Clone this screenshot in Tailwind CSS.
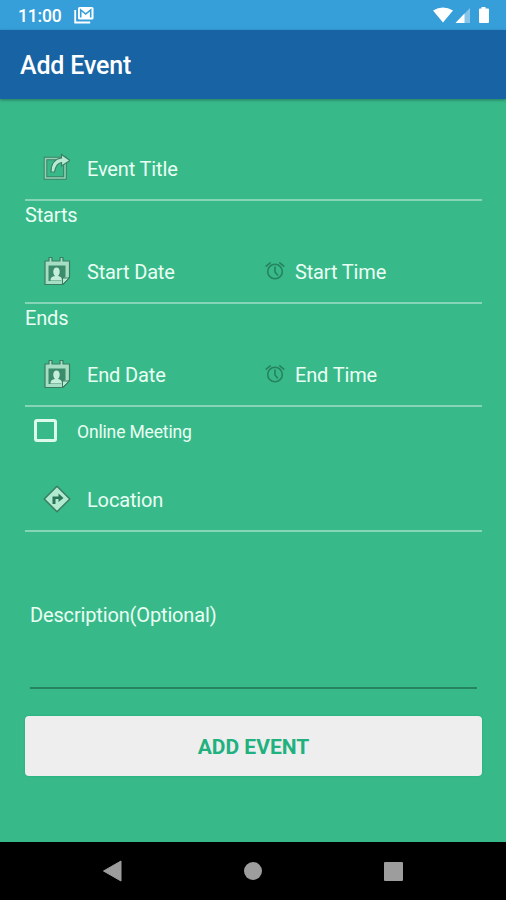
<!DOCTYPE html>
<html lang="en">
<head>
    <meta charset="UTF-8">
    <meta name="viewport" content="width=device-width, initial-scale=1">
    <title>Add Event</title>
    <script src="https://cdn.jsdelivr.net/npm/@tailwindcss/browser@4"></script>
</head>

<body class="flex flex-col h-screen overflow-hidden bg-[#38b98a] font-[Roboto,sans-serif] text-[20px] leading-7 tracking-[-0.15px] text-[#eafff3]">

    <!-- shared icons -->
    <svg class="hidden">
        <symbol id="calendar" viewBox="0 0 28 30">
            <path d="M2 5h4V1.500h3V5h8V1.500h3V5h6.500v16.500L20 28.500H2z" fill="#a5dec3" stroke="#397e62" stroke-width="1.200" stroke-linejoin="round"/>
            <path d="M5.500 9.500h17v11L18 25H5.500z" fill="#3c8b6a"/>
            <path d="M7.500 24.500c0-3 1.500-4 4.500-4.500-2.500-2-2.500-8.500 1.500-8.500s4 6.500 1.500 8.500c2.500.5 4 1.500 4 4.500z" fill="#c5eed9"/>
            <path d="M19.500 28.500V22h6.500z" fill="#b8ead3" stroke="#397e62"/>
        </symbol>
        <symbol id="alarm" viewBox="0 0 20 20">
            <g fill="none" stroke="#26825f" stroke-width="1.600" stroke-linecap="round">
                <circle cx="10" cy="10.500" r="7.300"/>
                <path d="M10 6v5l2.500 3M1.200 5.200l4-3.400M18.800 5.200l-4-3.400"/>
            </g>
        </symbol>
    </svg>

    <div class="flex items-center justify-between h-[30px] shrink-0 pl-[18px] pr-[15px] bg-[#369fd9] text-white">
        <div class="flex items-center gap-[12px]">
            <span class="text-[17.500px] font-medium leading-none pt-[3px]">11:00</span>
            <svg class="w-5 h-[18px]" viewBox="0 0 20 18" fill="none">
                <path d="M1.200 4v12.500h15" stroke="#fff" stroke-width="1.800"/>
                <rect x="4" y="1" width="15.500" height="12.500" rx="1.500" fill="#fff"/>
                <path d="M6.700 11.500V4l5 4 5-4v7.500" stroke="#369fd9" stroke-width="1.600"/>
            </svg>
        </div>
        <svg class="w-[58px] h-5" viewBox="0 0 58 20" fill="#fff">
            <path d="M0 5.500Q10-.5 20 5.500L10 17.500z"/>
            <path d="M22.500 18L37 3v15z" opacity=".4"/>
            <path d="M22.500 18l9-9.500V18z"/>
            <path d="M48.500 2h4v1.500H55q1 0 1 1V17q0 1-1 1h-8q-1 0-1-1V4.500q0-1 1-1h1.500z"/>
        </svg>
    </div>

    <header class="flex items-center h-[69px] shrink-0 px-5 pt-[3px] bg-[#1763a3] text-white text-[25px] font-medium shadow-[0_1px_3px_rgba(0,0,0,0.35)]">
        Add Event
    </header>

    <main class="grow pl-[25px] pr-6 pt-[38px]">
        <div class="flex items-center h-[64px] pl-[17px] pb-[2px] border-b-2 border-white/40">
            <svg class="w-7 h-7 mr-[17px]" viewBox="0 0 28 28" fill="none">
                <path d="M3.500 5.500H23V25H3.500z" stroke="#3b8165" stroke-width="3.600"/>
                <path d="M3.500 5.500H23V25H3.500z" stroke="#8fd3b4" stroke-width="1.600"/>
                <path d="M9 19C9 11.500 12.500 6 19.500 5V1.500l8.500 6-8.500 5.500V9.500c-4 .5-6 4-7 9.500z" fill="#b9ebd3" stroke="#3b8165" stroke-width="1.200"/>
            </svg>
            <span class="pt-[3px]">Event Title</span>
        </div>

        <div>Starts</div>
        <div class="flex items-center h-[75px] pl-[18px] pb-[9px] pt-[20px] border-b-2 border-white/40">
            <svg class="w-7 h-[30px] mr-[16px]"><use href="#calendar"/></svg>
            <span class="w-[178px] pt-[2px]">Start Date</span>
            <svg class="w-5 h-5 mr-[10px]"><use href="#alarm"/></svg>
            <span class="pt-[2px]">Start Time</span>
        </div>

        <div>Ends</div>
        <div class="flex items-center h-[75px] pl-[18px] pb-[9px] pt-[20px] border-b-2 border-white/40">
            <svg class="w-7 h-[30px] mr-[16px]"><use href="#calendar"/></svg>
            <span class="w-[178px] pt-[2px]">End Date</span>
            <svg class="w-5 h-5 mr-[10px]"><use href="#alarm"/></svg>
            <span class="pt-[2px]">End Time</span>
        </div>

        <label class="flex items-center h-12 pl-[9px] pb-[2px] gap-5">
            <input type="checkbox" class="appearance-none w-[23px] h-[23px] border-[3px] border-[#dcf9ec] rounded-[3px]">
            <span class="text-[17.500px] pt-[4px]">Online Meeting</span>
        </label>

        <div class="flex items-center h-[77px] pt-[12px] pl-[18px] border-b-2 border-white/40">
            <svg class="w-7 h-7 mr-[16px]" viewBox="0 0 28 28">
                <path d="M14 1.200L26.800 14 14 26.800 1.200 14z" fill="#b2ead0" stroke="#397e62" stroke-width="1.500" stroke-linejoin="round"/>
                <path d="M9.500 19v-7.500h6V8.500l5 4.500-5 4v-3H12.500v5z" fill="#2a7556"/>
            </svg>
            <span class="pt-[2px]">Location</span>
        </div>

        <div class="h-[157px] mx-[5px] pt-[69px] border-b-2 border-[#248360]">Description(Optional)</div>

        <button class="block w-full h-[60px] mt-[27px] pt-[2px] rounded-[4px] bg-[#eee] text-[#20b17e] text-[21px] tracking-normal font-bold shadow-[0_0_2px_#0fae76]">ADD EVENT</button>
    </main>

    <nav class="flex items-center h-[58px] shrink-0 pl-[102px] pr-[103px] justify-between bg-black">
        <svg class="w-5 h-[22px]" viewBox="0 0 20 22"><path d="M1.500 11L19 1v20z" fill="#9d9d9d" stroke="#9d9d9d" stroke-linejoin="round"/></svg>
        <div class="w-[18px] h-[18px] rounded-full bg-[#9d9d9d]"></div>
        <div class="w-[19px] h-[19px] rounded-[1px] bg-[#9d9d9d]"></div>
    </nav>
</body>
</html>
